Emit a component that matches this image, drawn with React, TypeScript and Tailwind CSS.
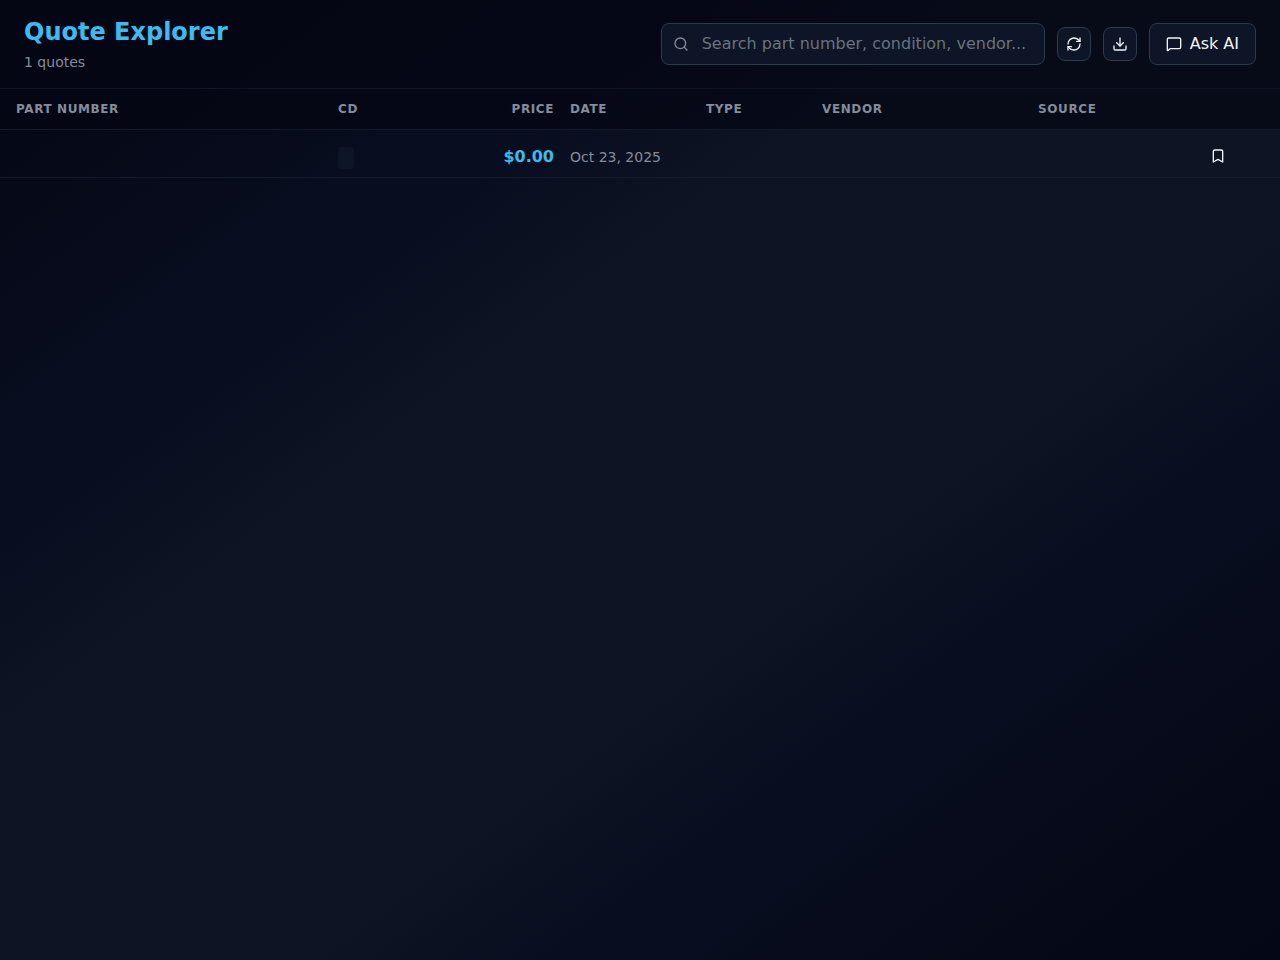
import { Bookmark, Download, MessageSquare, RefreshCw, Search } from "lucide-react";

interface Quote {
  id: string;
  partNumber: string;
  condition: string;
  price: number;
  date: string;
  type: string;
  vendor: string;
  source: string;
}

const quotes: Quote[] = [
  {
    id: "q-1",
    partNumber: "",
    condition: "",
    price: 0,
    date: "Oct 23, 2025",
    type: "",
    vendor: "",
    source: "",
  },
];

const columns =
  "grid grid-cols-[322px_116px_116px_136px_116px_216px_134px_124px]";

function Header({ count }: { count: number }) {
  return (
    <header className="flex items-center justify-between border-b border-[#0f1526] bg-[#040613]/70 px-6 py-4">
      <div>
        <h1 className="text-2xl font-bold text-[#3bbcf1]">Quote Explorer</h1>
        <p className="mt-1 text-sm text-[#848c9b]">{count} quotes</p>
      </div>
      <div className="flex items-center gap-3">
        <div className="relative">
          <Search className="absolute left-3 top-1/2 size-4 -translate-y-1/2 text-[#848c9b]" />
          <input
            type="text"
            placeholder="Search part number, condition, vendor..."
            className="block h-[42px] w-96 rounded-lg border border-[#2b3b4b] bg-[#0e1526] pb-0.5 pl-10 pr-4 text-base text-[#f1f4f8] outline-none placeholder:text-[#66747f]"
          />
        </div>
        <button
          aria-label="Refresh"
          className="flex size-[34px] items-center justify-center rounded-lg border border-[#2b3b4b] bg-[#0e1526] text-[#f1f4f8]"
        >
          <RefreshCw className="size-4" />
        </button>
        <button
          aria-label="Download"
          className="flex size-[34px] items-center justify-center rounded-lg border border-[#2b3b4b] bg-[#0e1526] text-[#f1f4f8]"
        >
          <Download className="size-4" />
        </button>
        <button className="flex h-[42px] items-center gap-2 rounded-lg border border-[#2b3b4b] bg-[#0e1526] px-4 text-base text-[#f1f4f8]">
          <MessageSquare className="size-4" />
          Ask AI
        </button>
      </div>
    </header>
  );
}

function QuoteRow({ quote }: { quote: Quote }) {
  return (
    <div className={`${columns} h-12 items-center border-b border-[#121a2b] pt-1.5 text-sm text-[#848c9b]`}>
      <div className="px-4">{quote.partNumber}</div>
      <div className="px-4">
        <span className="mt-0.5 block h-[22px] w-4 rounded bg-[#0e1526] px-2 text-xs">
          {quote.condition}
        </span>
      </div>
      <div className="text-right text-base font-bold text-[#3bbcf1]">
        ${quote.price.toFixed(2)}
      </div>
      <div className="px-4">{quote.date}</div>
      <div className="px-4">{quote.type}</div>
      <div className="px-4">{quote.vendor}</div>
      <div className="px-4">{quote.source}</div>
      <div className="flex justify-center pb-0.5">
        <button aria-label="Bookmark" className="text-[#f1f4f8]">
          <Bookmark className="size-4" />
        </button>
      </div>
    </div>
  );
}

export default function App() {
  return (
    <div className="min-h-screen bg-[linear-gradient(to_bottom_right,#040715_0%,#060918_12%,#080d1f_22%,#080d1f_28%,#0e1424_38%,#0e1424_62%,#080d1f_72%,#080d1f_76%,#060918_88%,#040715_100%)] font-['DejaVu_Sans',sans-serif]">
      <Header count={quotes.length} />
      <main>
        <div
          className={`${columns} h-[41px] items-center border-b border-[#121a2b] bg-[#040613]/70 text-xs font-bold uppercase tracking-wider text-[#848c9b]`}
        >
          <div className="px-4">Part Number</div>
          <div className="px-4">CD</div>
          <div className="text-right">Price</div>
          <div className="px-4">Date</div>
          <div className="px-4">Type</div>
          <div className="px-4">Vendor</div>
          <div className="px-4">Source</div>
          <div />
        </div>
        {quotes.map((quote) => (
          <QuoteRow key={quote.id} quote={quote} />
        ))}
      </main>
    </div>
  );
}
